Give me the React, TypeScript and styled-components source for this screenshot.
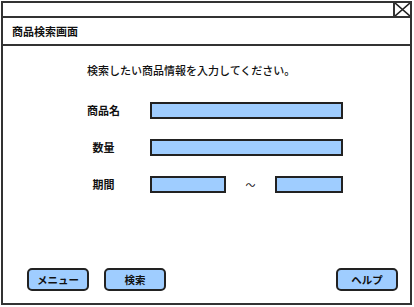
import styled, { createGlobalStyle } from "styled-components";
import * as React from "react";

const GlobalStyle = createGlobalStyle`
  body {
    margin: 0;
    background: #fff;
    font-family: "Noto Sans CJK JP", "Liberation Sans", sans-serif;
    color: #111;
  }
`;

const Window = styled.div`
  box-sizing: border-box;
  width: 411px;
  height: 304px;
  margin: 1px 0 0 1px;
  border: 2px solid #333;
  display: flex;
  flex-direction: column;
`;

const TitleBar = styled.div`
  height: 13px;
  border-bottom: 2px solid #333;
  display: flex;
  justify-content: flex-end;
`;

const CloseBox = styled.div`
  width: 15px;
  height: 13px;
  border-left: 2px solid #333;
  display: flex;

  & svg {
    width: 15px;
    height: 13px;
  }
`;

const Header = styled.div`
  height: 26px;
  border-bottom: 2px solid #333;
  display: flex;
  align-items: center;
  padding-left: 9px;
  font-size: 11px;
  font-weight: bold;
`;

const Body = styled.div`
  flex: 1;
  display: flex;
  flex-direction: column;
  padding: 17px 12px 12px 24px;
`;

const Lead = styled.div`
  margin-left: 60px;
  font-size: 11px;
  font-weight: 500;
  line-height: 14px;
`;

const Form = styled.div`
  margin-top: 25px;
  margin-left: 54px;
  display: grid;
  grid-template-columns: 45px 193px;
  column-gap: 24px;
  row-gap: 20px;
  align-items: center;
`;

const Label = styled.div`
  font-size: 11px;
  font-weight: bold;
  text-align: center;
  line-height: 17px;
`;

const Field = styled.div<{ w?: number }>`
  box-sizing: border-box;
  height: 17px;
  width: ${({ w }) => (w ? `${w}px` : "100%")};
  background: #9fcdff;
  border: 2px solid #222;
`;

const Range = styled.div`
  display: flex;
  align-items: center;
`;

const Tilde = styled.div`
  flex: 1;
  text-align: center;
  font-size: 10px;
`;

const Buttons = styled.div`
  margin-top: auto;
  display: flex;
  gap: 15px;
`;

const Button = styled.button<{ right?: boolean }>`
  box-sizing: border-box;
  width: 62px;
  height: 23px;
  border: 2px solid #222;
  border-radius: 5px;
  background: #9fcdff;
  font-family: "Noto Sans CJK JP", sans-serif;
  font-size: 10.5px;
  font-weight: bold;
  color: #111;
  padding: 0;
  margin-left: ${({ right }) => (right ? "auto" : "0")};
`;

const App: React.FC = () => {
  return (
    <>
      <GlobalStyle/>
      <Window>
        <TitleBar>
          <CloseBox>
            <svg viewBox="0 0 15 13">
              <path d="M0 0 L15 13 M15 0 L0 13" stroke="#222" strokeWidth="1.6"/>
            </svg>
          </CloseBox>
        </TitleBar>
        <Header>商品検索画面</Header>
        <Body>
          <Lead>検索したい商品情報を入力してください。</Lead>
          <Form>
            <Label>商品名</Label>
            <Field/>
            <Label>数量</Label>
            <Field/>
            <Label>期間</Label>
            <Range>
              <Field w={76}/>
              <Tilde>～</Tilde>
              <Field w={68}/>
            </Range>
          </Form>
          <Buttons>
            <Button>メニュー</Button>
            <Button>検索</Button>
            <Button right>ヘルプ</Button>
          </Buttons>
        </Body>
      </Window>
    </>
  );
};

export default App;
